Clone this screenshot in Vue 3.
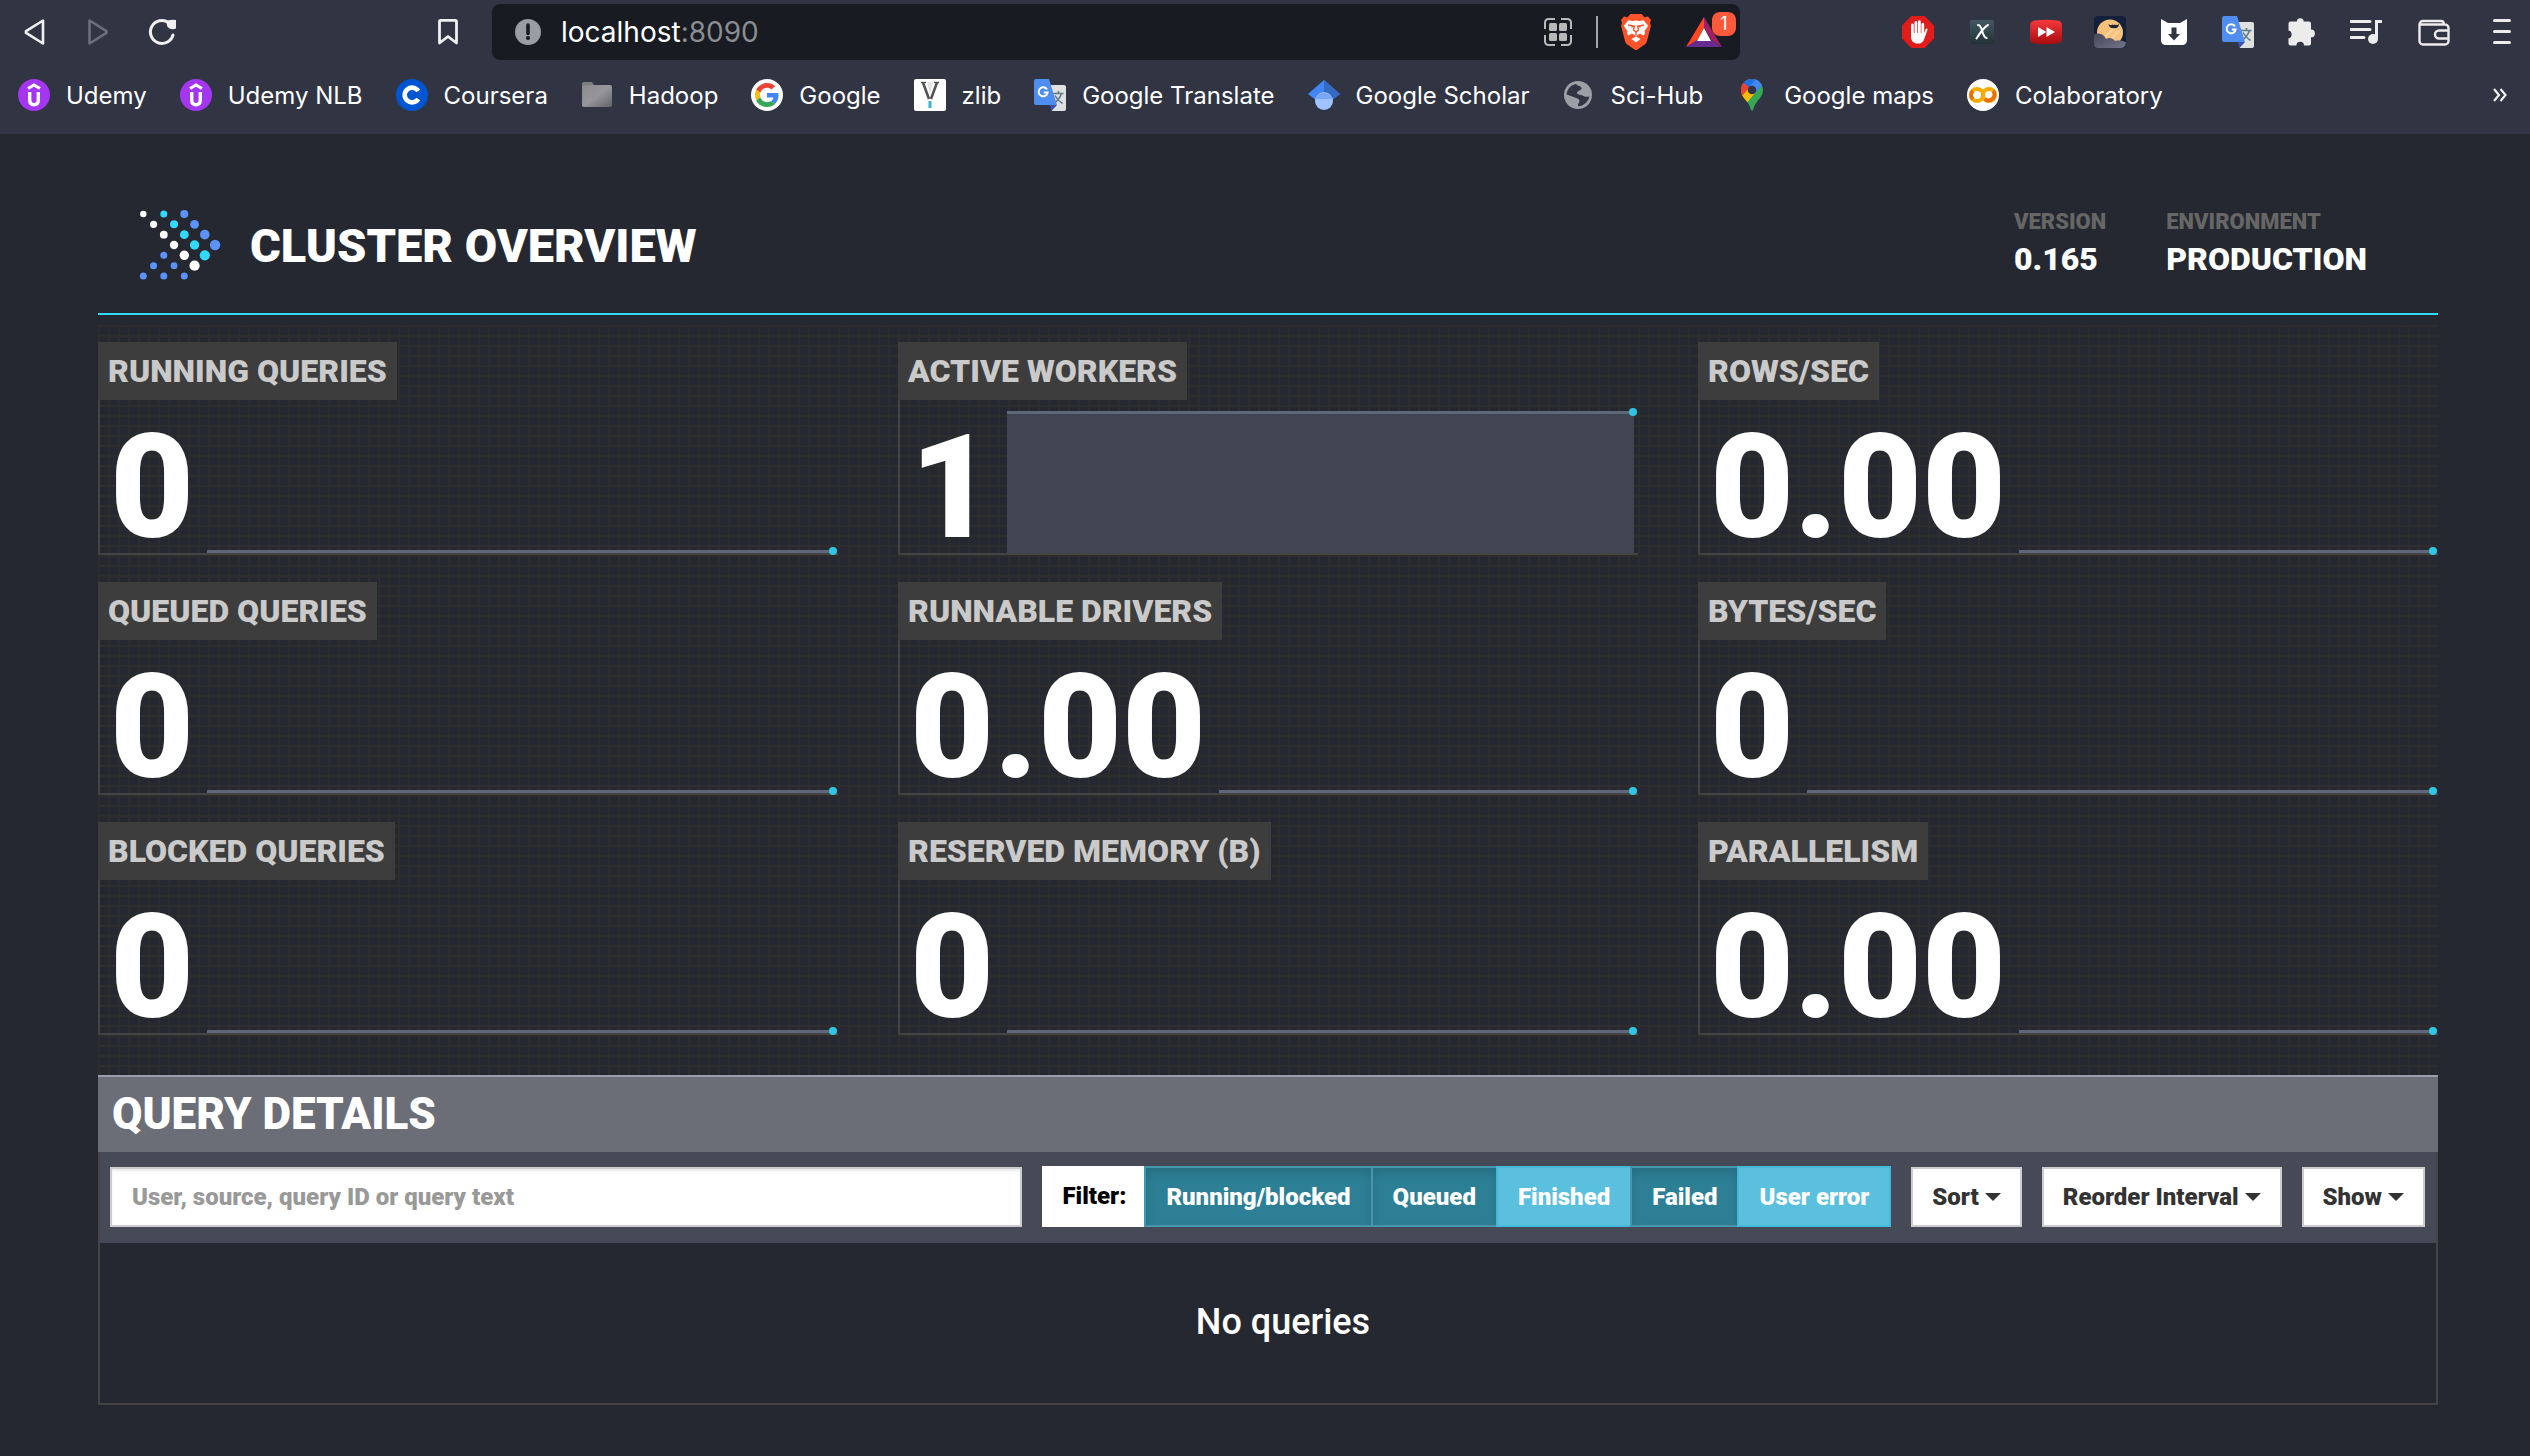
<script setup>
import { ref } from 'vue'

const bookmarks = [
  { label: 'Udemy', icon: 'udemy' },
  { label: 'Udemy NLB', icon: 'udemy' },
  { label: 'Coursera', icon: 'coursera' },
  { label: 'Hadoop', icon: 'folder' },
  { label: 'Google', icon: 'google' },
  { label: 'zlib', icon: 'zlib' },
  { label: 'Google Translate', icon: 'translate' },
  { label: 'Google Scholar', icon: 'scholar' },
  { label: 'Sci-Hub', icon: 'globe' },
  { label: 'Google maps', icon: 'maps' },
  { label: 'Colaboratory', icon: 'colab' }
]

const extensions = [
  { label: 'Ad blocker', icon: 'hand' },
  { label: 'X', icon: 'xbox' },
  { label: 'Video speed', icon: 'forward2' },
  { label: 'Night mode', icon: 'night' },
  { label: 'Downloader', icon: 'download' },
  { label: 'Translate', icon: 'translate' },
  { label: 'Extensions', icon: 'puzzle' },
  { label: 'Media', icon: 'music' }
]

const stats = [
  { label: 'Running queries', value: '0' },
  { label: 'Active workers', value: '1', full: true },
  { label: 'Rows/sec', value: '0.00' },
  { label: 'Queued queries', value: '0' },
  { label: 'Runnable drivers', value: '0.00' },
  { label: 'Bytes/sec', value: '0' },
  { label: 'Blocked queries', value: '0' },
  { label: 'Reserved memory (B)', value: '0' },
  { label: 'Parallelism', value: '0.00' }
]

const filters = ref([
  { label: 'Running/blocked', on: true },
  { label: 'Queued', on: true },
  { label: 'Finished', on: false },
  { label: 'Failed', on: true },
  { label: 'User error', on: false }
])

const menus = ['Sort', 'Reorder Interval', 'Show']
const search = ref('')

const W = '#ffffff'
const C = '#31d9fb'
const B = '#5c93fb'
// column, row, radius, colour
const dots = [
  [0, 0, 3.2, W], [2, 0, 3.5, C], [4, 0, 4, B],
  [1, 1, 3.6, W], [3, 1, 4, C], [5, 1, 4.4, B],
  [2, 2, 3.9, W], [4, 2, 4.4, C], [6, 2, 4.8, B],
  [3, 3, 4.2, W], [5, 3, 4.7, C], [7, 3, 5.2, B],
  [2, 4, 3.5, B], [4, 4, 4.7, W], [6, 4, 5.1, C],
  [1, 5, 3.5, B], [3, 5, 3.4, B], [5, 5, 5.1, W],
  [0, 6, 3.5, B], [2, 6, 3.5, B], [4, 6, 3.5, B]
]
</script>

<template>
  <svg class="defs" aria-hidden="true">
    <defs>
      <linearGradient id="g-folder" x1="0" y1="0" x2="1" y2="1">
        <stop offset="0" stop-color="#8b8b8d" /><stop offset=".5" stop-color="#97979b" /><stop offset="1" stop-color="#636366" />
      </linearGradient>
      <linearGradient id="g-red" x1="0" y1="0" x2="0" y2="1">
        <stop offset="0" stop-color="#f5393c" /><stop offset="1" stop-color="#a80b0f" />
      </linearGradient>
      <linearGradient id="g-x" x1="0" y1="0" x2="0" y2="1">
        <stop offset="0" stop-color="#435863" /><stop offset="1" stop-color="#223136" />
      </linearGradient>
      <linearGradient id="g-cloud" x1="0" y1="0" x2="1" y2="1">
        <stop offset="0" stop-color="#444556" /><stop offset="1" stop-color="#73748a" />
      </linearGradient>
    </defs>
    <symbol id="udemy" viewBox="0 0 32 32">
      <circle cx="16" cy="16" r="16" fill="#a435f0" />
      <path d="M10 9.500 16 6 22 9.500" fill="none" stroke="#fff" stroke-width="3" />
      <path d="M11.700 13v8c0 3 1.600 4.700 4.300 4.700s4.300-1.700 4.300-4.700v-8" fill="none" stroke="#fff" stroke-width="3.400" />
    </symbol>
    <symbol id="coursera" viewBox="0 0 32 32">
      <circle cx="16" cy="16" r="16" fill="#0056d2" />
      <path d="M22.300 12a7.400 7.400 0 1 0 0 8" fill="none" stroke="#fff" stroke-width="4.600" />
    </symbol>
    <symbol id="folder" viewBox="0 0 32 32">
      <path d="M1 5a2 2 0 0 1 2-2h8l2 3v4H1z" fill="#7d7d7f" />
      <rect x="1" y="6" width="30" height="22" rx="2" fill="url(#g-folder)" />
    </symbol>
    <symbol id="google" viewBox="0 0 32 32">
      <circle cx="16" cy="16" r="16" fill="#fff" />
      <g transform="translate(4 4) scale(.5)">
        <path fill="#EA4335" d="M24 9.500c3.540 0 6.710 1.220 9.210 3.600l6.850-6.850C35.900 2.380 30.470 0 24 0 14.620 0 6.510 5.380 2.560 13.220l7.980 6.190C12.430 13.720 17.740 9.500 24 9.500z" />
        <path fill="#4285F4" d="M46.980 24.550c0-1.570-.15-3.090-.38-4.550H24v9.020h12.940c-.58 2.960-2.260 5.480-4.780 7.180l7.730 6c4.510-4.180 7.090-10.360 7.090-17.650z" />
        <path fill="#FBBC05" d="M10.530 28.590c-.48-1.450-.76-2.990-.76-4.590s.27-3.140.76-4.590l-7.980-6.190C.92 16.460 0 20.120 0 24c0 3.880.92 7.540 2.560 10.780l7.970-6.190z" />
        <path fill="#34A853" d="M24 48c6.480 0 11.930-2.130 15.890-5.810l-7.730-6c-2.150 1.450-4.920 2.300-8.160 2.300-6.260 0-11.570-4.220-13.470-9.910l-7.980 6.190C6.510 42.620 14.620 48 24 48z" />
      </g>
    </symbol>
    <symbol id="zlib" viewBox="0 0 32 32">
      <rect width="32" height="32" rx="2" fill="#fff" />
      <path d="M13 3h6l-3 13z" fill="#e4e4e4" />
      <path d="M9 3.500 15 20M23 3.500 17 20" fill="none" stroke="#555" stroke-width="2.600" />
      <path d="M7 3.500h5M20 3.500h5" stroke="#555" stroke-width="1.400" />
      <rect x="14.500" y="22" width="3" height="7" fill="#43b0c9" />
    </symbol>
    <symbol id="translate" viewBox="0 0 32 32">
      <path d="M12 6h18a2 2 0 0 1 2 2v22a2 2 0 0 1-2 2H18z" fill="#dfe0e0" />
      <path d="M19 14.500h10.500M24.500 12v2.500M27.500 14.500Q25 21.500 19.500 24.500M21 16.500Q23.500 21.500 28.500 24.500" fill="none" stroke="#607d86" stroke-width="1.600" />
      <path d="M16 26h7l-5.500 6z" fill="#3a50b5" />
      <path d="M2 0h13l8 26H2a2 2 0 0 1-2-2V2a2 2 0 0 1 2-2z" fill="#4f8df0" />
      <path d="M13 10.500a4.500 4.500 0 1 0 .6 3H9.800" fill="none" stroke="#fff" stroke-width="2" />
    </symbol>
    <symbol id="scholar" viewBox="0 0 32 32">
      <path d="M16 1 0 15l8 6h16l8-6z" fill="#4285f4" />
      <path d="M16 1v17l8 3 8-6z" fill="#356ac3" />
      <circle cx="16" cy="22" r="9" fill="#a0c3ff" />
      <path d="M7.500 20a9 9 0 0 1 17 0z" fill="#76a7fa" />
    </symbol>
    <symbol id="globe" viewBox="0 0 32 32">
      <circle cx="16" cy="16" r="14" fill="#9aa0a6" />
      <path d="M14 5c1.500 2.500 5 1.500 5.500 4 .3 2.600-4.500 2.500-4.500 5 0 2 4.500 1.500 6.500 3 2 1.200 4.500.8 6 .5C26 23 21.500 27 16.500 27.300c-1.500-1.500.5-3 1-5 .2-2.800-3.500-3.300-6-4.300-2.500-.8-4.500-2-6.800-2.500C5 10 9 6 14 5z" fill="#313443" />
      <path d="M5 17.500c2 .5 4 1.500 6 2.800 1.500 1.200.5 3.200-1 4.200C7 23 5.300 20.500 5 17.500z" fill="#9aa0a6" />
    </symbol>
    <symbol id="maps" viewBox="0 0 32 32">
      <clipPath id="pin"><path d="M16 0C9.800 0 5 4.900 5 11c0 4.500 2.300 7 5.300 10.800 2 2.600 3.600 5 4.500 8.700.5 1.800 1.900 1.800 2.400 0 .9-3.700 2.500-6.100 4.500-8.700C24.700 18 27 15.500 27 11 27 4.900 22.200 0 16 0z" /></clipPath>
      <g clip-path="url(#pin)">
        <rect width="32" height="32" fill="#34a853" />
        <path d="M0 0h20L5 20H0z" fill="#ea4335" />
        <path d="M7.500 3.800 13 8.500 20 0H8z" fill="#1a73e8" />
        <path d="M20 0 12.500 8.800l6.500 5.500L28 5z" fill="#4285f4" />
        <path d="m5 17 8-9 6 6-9 11z" fill="#fbbc04" />
        <path d="M3 6 7.500 3.800 13 8.500 6 17H2z" fill="#ea4335" />
      </g>
      <circle cx="16" cy="11" r="4.300" fill="#313443" />
    </symbol>
    <symbol id="colab" viewBox="0 0 32 32">
      <circle cx="16" cy="16" r="16" fill="#fff" />
      <circle cx="10" cy="16" r="6" fill="none" stroke="#f9ab00" stroke-width="4" />
      <circle cx="22" cy="16" r="6" fill="none" stroke="#f9ab00" stroke-width="4" />
      <path d="M5.800 11.800a6 6 0 0 0 0 8.400M17.800 20.200a6 6 0 0 0 8.400-8.400" fill="none" stroke="#e8710a" stroke-width="4" />
    </symbol>
    <symbol id="hand" viewBox="0 0 32 32">
      <path d="M9.400 0h13.200L32 9.400v13.200L22.600 32H9.400L0 22.600V9.400z" fill="#e21b1b" />
      <path d="M10.400 19V9M13.900 17V6.300M17.400 17V5.600M20.800 18V8.300" stroke="#fff" stroke-width="2.800" stroke-linecap="round" />
      <path d="M9 17h13l1.500-3.500c.8-1.500 2.300-1 2 .3L22.600 22c-1 3.500-2.600 5.500-6.600 5.500-4.500 0-7-2.500-7-7z" fill="#fff" />
    </symbol>
    <symbol id="xbox" viewBox="0 0 32 32">
      <rect x="4" y="4" width="24" height="24" rx="2" fill="url(#g-x)" />
      <path d="M12 9c2 0 2.500 1 3.500 4s2 8.500 5 9M22 9c-4 2-8 8-11.500 13.500" fill="none" stroke="#fff" stroke-width="2" stroke-linecap="round" />
    </symbol>
    <symbol id="forward2" viewBox="0 0 32 32">
      <path d="M5 4.500q11-1.500 22 0c3.500.5 5 2 5 5v13c0 3-1.500 4.500-5 5q-11 1.500-22 0c-3.500-.5-5-2-5-5v-13c0-3 1.500-4.500 5-5z" fill="url(#g-red)" />
      <path d="M8 11l8.500 5L8 21zM16.500 11l8.500 5-8.500 5z" fill="#fff" />
    </symbol>
    <symbol id="night" viewBox="0 0 32 32">
      <rect width="32" height="32" rx="4" fill="#13203a" />
      <circle cx="16" cy="16.500" r="13" fill="#f8c27c" />
      <path d="M11 21 22 10M16 24l10-10" stroke="#fad49c" stroke-width="2" />
      <path d="M14.500 7.500c1 2 2.500 2 4 1l1.200.5 1.200-.5c1.500 1 3 .8 4-1 .2 3.500-2 5-5.200 4.800-3.500 0-5.200-1.800-5.200-4.800z" fill="#222536" />
      <path d="M0 18c5-1.500 10 0 12 5 3-2 7-1 9 2 4-1 8-.5 11 1.500-.3 3.300-2 5.500-5 5.500H4c-2.500 0-4-1.500-4-4z" fill="url(#g-cloud)" />
    </symbol>
    <symbol id="download" viewBox="0 0 32 32">
      <path d="M3 3l7 4h12l7-4v21c0 3-2 5-5 5H8c-3 0-5-2-5-5z" fill="#fff" />
      <path d="M13.500 11.500h5V18H22l-6 6.500L10 18h3.500z" fill="#313443" />
    </symbol>
    <symbol id="puzzle" viewBox="0 0 32 32">
      <path d="M11 5.500a3.300 3.300 0 0 1 6.600 0h5.400a2 2 0 0 1 2 2v6a3.900 3.900 0 0 1 0 7.800v6.200a2 2 0 0 1-2 2h-5a3.800 3.800 0 0 0-7.600 0H4.500a2 2 0 0 1-2-2v-5.200a4 4 0 0 0 0-7.800v-7a2 2 0 0 1 2-2z" fill="#ececec" />
    </symbol>
    <symbol id="music" viewBox="0 0 32 32">
      <path d="M1 5.500h19M1 13.500h19M1 21.500h13M26.500 22V5.500H31" fill="none" stroke="#ececec" stroke-width="3" stroke-linecap="round" />
      <circle cx="23" cy="23" r="5" fill="#ececec" />
    </symbol>
    <symbol id="wallet" viewBox="0 0 32 32">
      <path d="M26 7.500C25.500 5.500 24.500 5 23 5H5a3.500 3.500 0 0 0-3.500 3.500V25A3.500 3.500 0 0 0 5 28.500h22a3.500 3.500 0 0 0 3.500-3.500V12A3.500 3.500 0 0 0 27 8.500H2" fill="none" stroke="#ececec" stroke-width="2.400" />
      <path d="M30 14.500h-9a4 4 0 0 0 0 8h9" fill="none" stroke="#ececec" stroke-width="2.400" />
    </symbol>
    <symbol id="menu" viewBox="0 0 32 32">
      <path d="M8.500 4.500h15M8.500 15.500h15M8.500 26.500h15" stroke="#ececec" stroke-width="3" stroke-linecap="round" />
    </symbol>
    <symbol id="brave" viewBox="0 0 32 36">
      <path d="M10.500 0h11l3 3.200 3.500-.8L31 6l-1 3 1 2.500-4 15.500c-.6 2-1.500 3-3 4l-6.500 4.500q-1.500 1-3 0L8 31c-1.500-1-2.400-2-3-4L1 11.500 2 9 1 6l3-3.600 3.500.8z" fill="#fb542b" />
      <path d="M16 6.500l4 .5 3.500-.7L28 11.500c-.5 2-2.500 4-3.500 5.500.8 2 .3 3.500-1 4.500l-3.500-2-2.500 1.500L16 22l-1.500-1-2.500-1.500-3.500 2c-1.300-1-1.800-2.500-1-4.500C6.500 15.500 4.500 13.500 4 11.500l4.500-5.200L12 7z" fill="#fff" />
      <path d="M8 11l5.500 1-2 1M24 11l-5.500 1 2 1M14.500 11.500 13.500 16l2.500 2 2.500-2-1-4.500M16 18v3" fill="none" stroke="#fb542b" stroke-width="1.400" />
      <path d="M16 22.500l4.500 2.500-4.500 3.500-4.500-3.500z" fill="#fff" />
    </symbol>
    <symbol id="bat" viewBox="0 0 36 32">
      <path d="M18 1v10.500L11.500 24 0 31z" fill="#ff4724" />
      <path d="M18 1v10.500L25 24l11 7z" fill="#9e1f63" />
      <path d="M0 31l11.500-7H25l11 7z" fill="#662d91" />
      <path d="M18 12l7 13H11z" fill="#fff" />
    </symbol>
  </svg>

  <header class="chrome">
    <div class="bar">
      <nav class="moves">
        <button type="button" aria-label="Back"><svg viewBox="0 0 32 32"><path d="M24 4.500v23L7.500 17.200q-1.500-1.200 0-2.400z" fill="none" stroke="#f0f0f0" stroke-width="2.600" stroke-linejoin="round" /></svg></button>
        <button type="button" aria-label="Forward"><svg viewBox="0 0 32 32"><path d="M6.500 4.500v23L23 17.200q1.500-1.200 0-2.400z" fill="none" stroke="#6c6e79" stroke-width="2.600" stroke-linejoin="round" /></svg></button>
        <button type="button" aria-label="Reload"><svg viewBox="0 0 32 32"><path d="M26 19A11.500 11.500 0 1 1 21.500 6.500" fill="none" stroke="#f0f0f0" stroke-width="3" stroke-linecap="round" /><path d="M19 5.500Q22 3 29 4v8.500Q24 14.500 20.500 11z" fill="#f0f0f0" /></svg></button>
      </nav>
      <button type="button" class="mark" aria-label="Bookmark this page"><svg viewBox="0 0 32 32"><path d="M7.500 5.500q0-1.200 1.200-1.200h14.600q1.200 0 1.200 1.200V27L16 20.500 7.500 27z" fill="none" stroke="#f0f0f0" stroke-width="2.800" stroke-linejoin="round" /></svg></button>
      <div class="address">
        <svg class="info" viewBox="0 0 26 26"><circle cx="13" cy="13" r="13" fill="#9a9da6" /><path d="M13 6v8.500" stroke="#181b22" stroke-width="3.600" stroke-linecap="round" /><circle cx="13" cy="19" r="2" fill="#181b22" /></svg>
        <div class="url" role="textbox" aria-label="Address" tabindex="0">localhost<span>:8090</span></div>
        <button type="button" aria-label="Apps"><svg viewBox="0 0 32 32"><g fill="#b9b9b9"><rect x="7" y="7" width="8" height="8" rx="1.500" /><rect x="17" y="7" width="8" height="8" rx="1.500" /><rect x="7" y="17" width="8" height="8" rx="1.500" /><rect x="17" y="17" width="8" height="8" rx="1.500" /></g><path d="M13 3H6.500A3.500 3.500 0 0 0 3 6.500V13M19 3h6.500A3.500 3.500 0 0 1 29 6.500V13M13 29H6.500A3.500 3.500 0 0 1 3 25.500V19M19 29h6.500a3.500 3.500 0 0 0 3.500-3.500V19" fill="none" stroke="#b9b9b9" stroke-width="2" /></svg></button>
        <span class="rule"></span>
        <button type="button" class="shield" aria-label="Brave Shields"><svg><use href="#brave" /></svg></button>
        <button type="button" class="rewards" aria-label="Brave Rewards"><svg><use href="#bat" /></svg><span class="badge">1</span></button>
      </div>
      <div class="tools">
        <button v-for="e in extensions" :key="e.label" type="button" :aria-label="e.label"><svg><use :href="'#' + e.icon" /></svg></button>
        <div class="last">
          <button type="button" aria-label="Wallet"><svg><use href="#wallet" /></svg></button>
          <button type="button" aria-label="Menu"><svg><use href="#menu" /></svg></button>
        </div>
      </div>
    </div>
    <nav class="bookmarks" aria-label="Bookmarks">
      <a v-for="b in bookmarks" :key="b.label" href="#"><svg><use :href="'#' + b.icon" /></svg>{{ b.label }}</a>
      <button type="button" class="more" aria-label="More bookmarks">
        <svg viewBox="0 0 32 32"><path d="M10 10l5 6-5 6M16.500 10l5 6-5 6" fill="none" stroke="#f0f0f0" stroke-width="2.200" /></svg>
      </button>
    </nav>
  </header>

  <main>
    <div class="masthead">
      <svg class="logo" viewBox="0 0 84 76" aria-hidden="true">
        <circle v-for="(d, i) in dots" :key="i" :cx="5.300 + d[0] * 10.250" :cy="6 + d[1] * 10.330" :r="d[2]" :fill="d[3]" />
      </svg>
      <h1>Cluster Overview</h1>
      <dl>
        <div><dt>Version</dt><dd>0.165</dd></div>
        <div><dt>Environment</dt><dd>production</dd></div>
      </dl>
    </div>

    <section class="stats">
      <article v-for="s in stats" :key="s.label" class="stat">
        <h2>{{ s.label }}</h2>
        <div class="body">
          <span class="value">{{ s.value }}</span>
          <div class="spark" :class="{ full: s.full }"></div>
        </div>
      </article>
    </section>

    <section class="queries">
      <h2>Query Details</h2>
      <div class="controls">
        <input v-model="search" type="text" aria-label="Search queries" placeholder="User, source, query ID or query text">
        <div class="filters" role="group" aria-label="Filter">
          <span class="caption">Filter:</span>
          <button v-for="f in filters" :key="f.label" type="button" :class="{ on: f.on }" :aria-pressed="f.on" @click="f.on = !f.on">{{ f.label }}</button>
        </div>
        <button v-for="m in menus" :key="m" type="button" class="menu" aria-haspopup="true">{{ m }}<i class="caret"></i></button>
      </div>
      <p class="empty">No queries</p>
    </section>
  </main>
</template>

<style>
body {
  margin: 0;
  background: #252830;
}
</style>

<style scoped>
.defs {
  position: absolute;
  width: 0;
  height: 0;
}

button {
  margin: 0;
  padding: 0;
  border: 0;
  background: none;
  font: inherit;
  color: inherit;
  cursor: pointer;
}

.chrome {
  background: #313443;
  color: #fff;
  font-family: Inter, "Open Sans", sans-serif;
}

.chrome svg {
  display: block;
  width: 32px;
  height: 32px;
}

.bar {
  display: flex;
  align-items: center;
  height: 64px;
  padding: 0 12px 0 19px;
}

.moves {
  display: flex;
  gap: 32px;
}

.mark {
  margin: 0 28px 0 auto;
}

.address {
  flex: 0 0 auto;
  box-sizing: border-box;
  display: flex;
  align-items: center;
  width: 1248px;
  height: 56px;
  padding: 0 18px 0 23px;
  border-radius: 8px;
  background: #181b22;
}

.address .info {
  width: 26px;
  height: 26px;
}

.url {
  flex: 1;
  margin-left: 20px;
  font-size: 28px;
}

.url span {
  color: #8b8d91;
}

.rule {
  width: 2px;
  height: 32px;
  margin: 0 22px;
  background: #a5a5a8;
}

.chrome .shield svg {
  height: 36px;
}

.rewards {
  position: relative;
  margin-left: 34px;
}

.chrome .rewards svg {
  width: 36px;
}

.badge {
  position: absolute;
  top: -4px;
  right: -14px;
  width: 24px;
  height: 24px;
  border-radius: 8px;
  background: #fb5a3a;
  font-size: 18px;
  line-height: 24px;
  text-align: center;
}

.tools,
.last {
  display: flex;
}

.tools {
  gap: 32px;
  margin-left: 162px;
}

.last {
  gap: 36px;
  margin-left: 4px;
}

.bookmarks {
  display: flex;
  align-items: center;
  gap: 33px;
  height: 62px;
  padding: 0 14px 8px 18px;
}

.bookmarks a {
  display: flex;
  align-items: center;
  gap: 16px;
  color: #fff;
  font-size: 24px;
  text-decoration: none;
  white-space: nowrap;
}

.more {
  margin-left: auto;
}

main {
  padding: 54px 92px 50px 98px;
  color: #fff;
  font-family: Roboto, sans-serif;
}

h1,
h2,
dl,
dd,
p {
  margin: 0;
}

.masthead {
  display: flex;
  align-items: center;
  height: 115px;
  padding: 0 71px 10px 40px;
  border-bottom: 2px solid #31d9fb;
}

.logo {
  width: 84px;
  height: 76px;
}

h1 {
  margin-left: 28px;
  font-size: 47px;
  font-weight: 900;
  text-transform: uppercase;
}

dl {
  display: flex;
  gap: 60px;
  margin-left: auto;
  padding-bottom: 6px;
  font-weight: 900;
  text-transform: uppercase;
}

dt {
  color: #666;
  font-size: 22px;
  line-height: 32px;
}

dd {
  font-size: 32px;
  line-height: 42px;
}

.stats {
  display: grid;
  grid-template-columns: repeat(3, 1fr);
  gap: 27px 60px;
  margin-top: 10px;
  padding: 17px 0 40px;
  background:
    repeating-linear-gradient(to right, #2d2d2d 0 2px, transparent 2px 10px),
    repeating-linear-gradient(to bottom, #2d2d2d 0 2px, #262831 2px 10px);
}

.stat {
  border-left: 2px solid #444;
  border-bottom: 2px solid #444;
}

.stat h2 {
  width: fit-content;
  margin-left: -2px;
  padding: 0 10px;
  background: #3d3d3d;
  color: #cacaca;
  font-size: 32px;
  font-weight: 900;
  line-height: 58px;
  text-transform: uppercase;
}

.body {
  display: flex;
  height: 153px;
}

.value {
  padding: 0 13px 0 10px;
  font-size: 145px;
  font-weight: 900;
  line-height: 175px;
}

.spark {
  position: relative;
  flex: 1;
  align-self: flex-end;
  margin-right: 4px;
  border-top: 3px solid #606779;
}

.spark.full {
  height: 139px;
  background: #404551;
}

.spark::after {
  content: "";
  position: absolute;
  top: -6px;
  right: -3px;
  width: 8px;
  height: 8px;
  border-radius: 50%;
  background: #31c5e5;
}

.queries {
  border: 2px solid #444;
  border-top: 0;
}

.queries h2 {
  margin: 0 -2px;
  padding: 0 14px;
  border-top: 2px solid #9c9cab;
  background: #6b6e77;
  font-size: 44px;
  font-weight: 900;
  line-height: 75px;
  text-transform: uppercase;
}

.controls {
  display: flex;
  align-items: center;
  gap: 20px;
  padding: 14px 11px 16px 10px;
  background: #454a56;
  font-size: 24px;
  font-weight: 900;
}

.controls input {
  flex: 1;
  box-sizing: border-box;
  min-width: 0;
  height: 60px;
  padding: 0 20px;
  border: 2px solid #ccc;
  background: #fff;
  box-shadow: inset 0 2px 2px rgba(0, 0, 0, 0.08);
  color: #555;
  font: inherit;
}

.controls input::placeholder {
  color: #999;
  opacity: 1;
}

.filters {
  display: flex;
}

.caption {
  padding: 0 18px 0 20px;
  background: #fff;
  color: #000;
  line-height: 61px;
}

.filters button {
  height: 61px;
  padding: 0 20px;
  border: 2px solid #46b8da;
  background: #5bc0de;
}

.filters button + button {
  margin-left: -2px;
}

.filters .on {
  border-color: #4796ad;
  background: #2d7f95;
  box-shadow: inset 0 6px 10px rgba(0, 0, 0, 0.125);
}

.menu {
  display: flex;
  align-items: center;
  gap: 6px;
  height: 60px;
  padding: 0 19px;
  border: 2px solid #ccc;
  background: #fff;
  color: #333;
  white-space: nowrap;
}

.caret {
  border: 8px solid transparent;
  border-top-color: #333;
  border-bottom: 0;
}

.empty {
  height: 160px;
  padding-left: 30px;
  font-size: 36px;
  font-weight: 500;
  line-height: 158px;
  text-align: center;
}
</style>
